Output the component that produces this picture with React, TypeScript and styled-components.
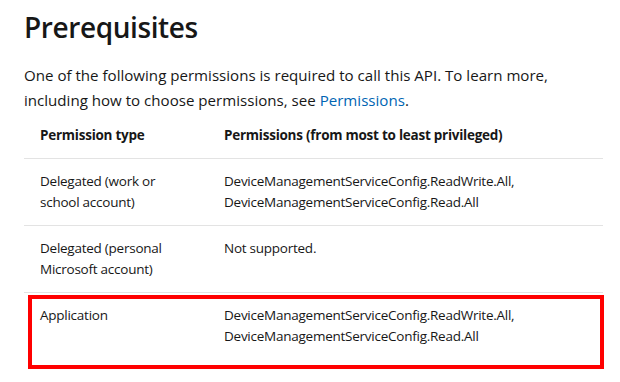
import styled, { createGlobalStyle } from "styled-components";

const GlobalStyle = createGlobalStyle`
    body {
        margin: 0;
        background: #fff;
        font-family: "Segoe UI", "Open Sans", "Noto Sans", sans-serif;
        color: #171717;
    }
`

const Page = styled.div`
    width: 620px;
    min-height: 382px;
    padding: 0 17px 0 24px;
    box-sizing: border-box;
`

const Title = styled.h2`
    margin: 0;
    padding-top: 9px;
    font-size: 28px;
    font-weight: 600;
    line-height: 36px;
    letter-spacing: -0.4px;
`

const Intro = styled.p`
    margin: 18px 0 0;
    font-size: 15.1px;
    line-height: 25px;
`

const Link = styled.a`
    color: #0065b3;
    text-decoration: none;
`

const TableWrap = styled.div`
    position: relative;
`

const Table = styled.table`
    width: 100%;
    table-layout: fixed;
    border-collapse: collapse;
    font-size: 13.5px;
    line-height: 21px;
    letter-spacing: -0.25px;
`

const HeadCell = styled.th<{ $first?: boolean }>`
    text-align: left;
    font-weight: 700;
    padding: 12px 16px;
    width: ${p => (p.$first ? "152px" : "auto")};
    border-bottom: 1px solid #e3e3e3;
    vertical-align: top;
`

const Cell = styled.td<{ $first?: boolean }>`
    padding: 12px ${p => (p.$first ? "24px" : "16px")} 12px 16px;
    vertical-align: top;
`

const Row = styled.tr<{ $last?: boolean }>`
    border-bottom: ${p => (p.$last ? "none" : "1px solid #e3e3e3")};
`

const Highlight = styled.div`
    position: absolute;
    left: 4px;
    right: -1px;
    bottom: -10px;
    height: 74px;
    border: 4px solid #ff0000;
    box-sizing: border-box;
    pointer-events: none;
`

const rows = [
    { type: "Delegated (work or school account)", perms: ["DeviceManagementServiceConfig.ReadWrite.All,", "DeviceManagementServiceConfig.Read.All"] },
    { type: "Delegated (personal Microsoft account)", perms: ["Not supported."] },
    { type: "Application", perms: ["DeviceManagementServiceConfig.ReadWrite.All,", "DeviceManagementServiceConfig.Read.All"] },
]

export default function App() {
    return (
        <>
            <GlobalStyle />
            <Page>
                <Title>Prerequisites</Title>
                <Intro>
                    One of the following permissions is required to call this API. To learn more,
                    including how to choose permissions, see <Link href="#">Permissions</Link>.
                </Intro>
                <TableWrap>
                    <Table>
                        <thead>
                            <tr>
                                <HeadCell $first>Permission type</HeadCell>
                                <HeadCell>Permissions (from most to least privileged)</HeadCell>
                            </tr>
                        </thead>
                        <tbody>
                            {rows.map((r, i) => (
                                <Row key={r.type} $last={i === rows.length - 1}>
                                    <Cell $first>{r.type}</Cell>
                                    <Cell>
                                        {r.perms.map((p, j) => (
                                            <div key={j}>{p}</div>
                                        ))}
                                    </Cell>
                                </Row>
                            ))}
                        </tbody>
                    </Table>
                    <Highlight />
                </TableWrap>
            </Page>
        </>
    )
}
